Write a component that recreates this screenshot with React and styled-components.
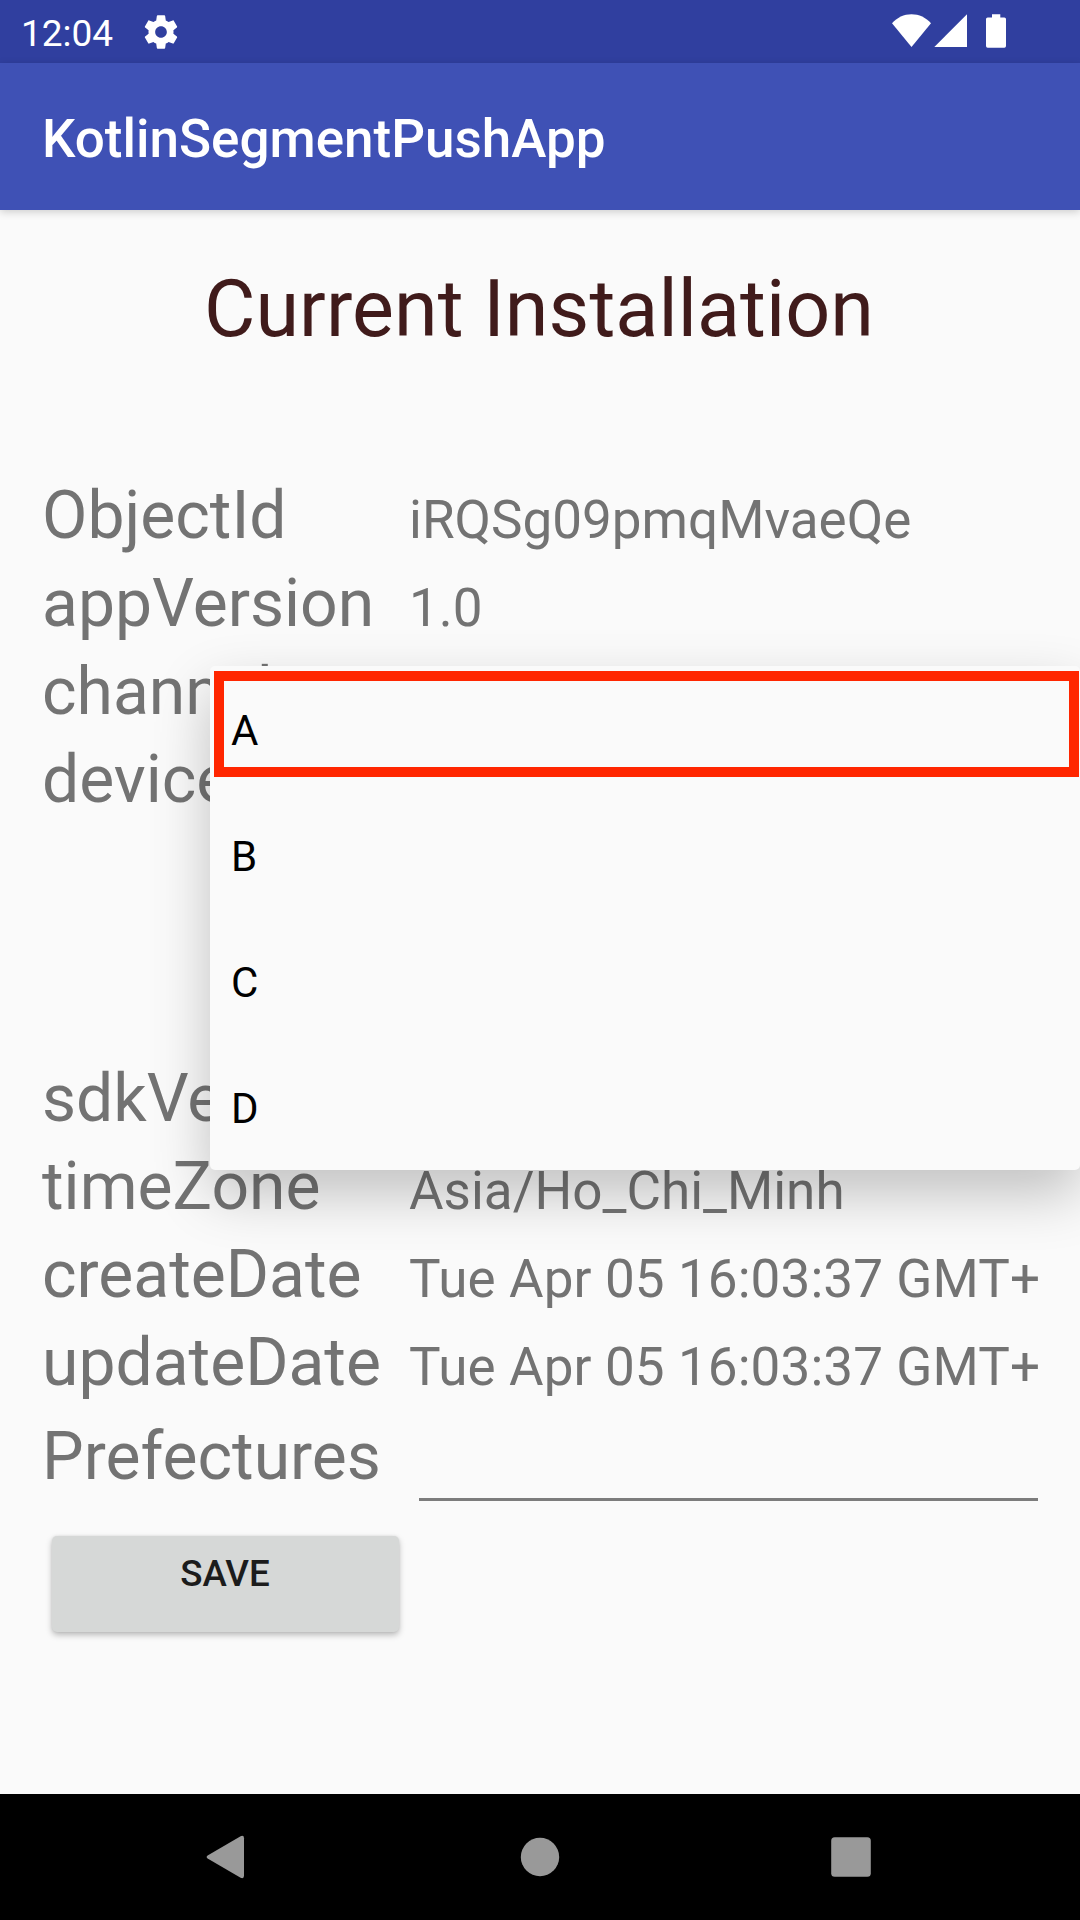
import React from "react";
import styled, { createGlobalStyle } from "styled-components";

const GlobalStyle = createGlobalStyle`
  *, *::before, *::after { box-sizing: border-box; }
  body { margin: 0; background: #fafafa; font-family: Roboto, "Noto Sans", sans-serif; }
`;

const Screen = styled.div`
  position: relative;
  display: flex;
  flex-direction: column;
  width: 1080px;
  height: 1920px;
  overflow: hidden;
  background: #fafafa;
`;

const StatusBar = styled.div`
  display: flex;
  align-items: center;
  height: 63px;
  flex: none;
  padding: 0 74px 0 21px;
  background: #303f9f;
  color: #fff;
`;

const Clock = styled.span`
  font-size: 37px;
  line-height: 44px;
  padding-top: 4px;
  width: 120px;
`;

const StatusIcons = styled.div`
  display: flex;
  align-items: center;
  margin-left: auto;
`;

const Glyph = styled.svg`
  display: block;
  flex: none;
  margin-left: ${(p) => p.$gap || 0}px;
`;

const AppBar = styled.header`
  display: flex;
  align-items: center;
  height: 147px;
  flex: none;
  padding: 5px 42px 0;
  background: #3f51b5;
  box-shadow: 0 2px 8px rgba(0, 0, 0, 0.18);
`;

const AppTitle = styled.h1`
  margin: 0;
  font-size: 53px;
  font-weight: 500;
  line-height: 62px;
  color: #fff;
`;

const Content = styled.main`
  display: flex;
  flex-direction: column;
  flex: 1;
  padding: 53px 42px 0;
`;

const Heading = styled.h2`
  margin: 0 0 117px;
  padding-right: 2px;
  font-size: 79px;
  font-weight: 400;
  line-height: 92px;
  letter-spacing: 0.08px;
  text-align: center;
  color: #401b1b;
`;

const Row = styled.div`
  display: flex;
  align-items: baseline;
  height: ${(p) => p.$height || 88}px;
  flex: none;
  color: #737373;
`;

const Label = styled.span`
  width: 367px;
  flex: none;
  font-size: 66px;
  line-height: 87px;
`;

const Value = styled.span`
  flex: 1;
  font-size: 53px;
  line-height: 62px;
  letter-spacing: ${(p) => (p.$date ? "0.1px" : "0")};
  white-space: nowrap;
`;

const FieldRow = styled.div`
  display: flex;
  height: 118px;
  flex: none;
  padding-top: 6px;
  color: #737373;
`;

const Field = styled.div`
  flex: 1;
  height: 88px;
  margin-left: 10px;
  border-bottom: 3px solid #7c7c7c;
`;

const SaveButton = styled.button`
  display: flex;
  justify-content: center;
  width: 347px;
  height: 96px;
  margin: 11px 0 0 10px;
  padding: 16px 1px 0 0;
  border: 0;
  border-radius: 5px;
  background: #d6d8d7;
  color: #1c1c1c;
  font-family: inherit;
  font-size: 36.75px;
  font-weight: 500;
  line-height: 43px;
  align-items: flex-start;
  box-shadow: 0 3px 6px rgba(0, 0, 0, 0.26), 0 0 3px rgba(0, 0, 0, 0.08);
`;

const Popup = styled.ul`
  position: absolute;
  left: 210px;
  top: 666px;
  width: 870px;
  margin: 0;
  padding: 0;
  list-style: none;
  border-radius: 5px;
  background: #fafafa;
  box-shadow: 0 24px 56px rgba(0, 0, 0, 0.23);
`;

const Option = styled.li`
  display: flex;
  align-items: center;
  height: 126px;
  padding: 3px 21px 0;
  font-size: 42px;
  line-height: 50px;
  color: #000;
`;

const Highlight = styled.div`
  position: absolute;
  left: 3.5px;
  top: 5px;
  width: 865.5px;
  height: 106px;
  border: 10px solid #ff2600;
`;

const NavBar = styled.nav`
  display: grid;
  grid-template-columns: repeat(3, 311px);
  justify-content: center;
  place-items: center;
  height: 126px;
  flex: none;
  background: #000;
`;

const details = [
  { label: "ObjectId", value: "iRQSg09pmqMvaeQe" },
  { label: "appVersion", value: "1.0" },
  { label: "channels" },
  { label: "deviceToken", height: 319 },
  { label: "sdkVersion" },
  { label: "timeZone", value: "Asia/Ho_Chi_Minh" },
  { label: "createDate", value: "Tue Apr 05 16:03:37 GMT+", date: true },
  { label: "updateDate", value: "Tue Apr 05 16:03:37 GMT+", date: true },
];

const options = ["A", "B", "C", "D"];

const gearPath =
  "M19.43 12.98c.04-.32.07-.64.07-.98s-.03-.66-.07-.98l2.11-1.65c.19-.15.24-.42.12-.64l-2-3.46c-.12-.22-.39-.3-.61-.22l-2.49 1c-.52-.4-1.08-.73-1.69-.98l-.38-2.65C14.46 2.18 14.25 2 14 2h-4c-.25 0-.46.18-.49.42l-.38 2.65c-.61.25-1.17.59-1.69.98l-2.49-1c-.23-.09-.49 0-.61.22l-2 3.46c-.13.22-.07.49.12.64l2.11 1.65c-.04.32-.07.65-.07.98s.03.66.07.98l-2.11 1.65c-.19.15-.24.42-.12.64l2 3.46c.12.22.39.3.61.22l2.49-1c.52.4 1.08.73 1.69.98l.38 2.65c.03.24.24.42.49.42h4c.25 0 .46-.18.49-.42l.38-2.65c.61-.25 1.17-.59 1.69-.98l2.49 1c.23.09.49 0 .61-.22l2-3.46c.12-.22.07-.49-.12-.64l-2.11-1.65zM12 15.5c-1.93 0-3.5-1.57-3.5-3.5s1.57-3.5 3.5-3.5 3.5 1.57 3.5 3.5-1.57 3.5-3.5 3.5z";

export default function App() {
  return (
    <Screen>
      <GlobalStyle />
      <StatusBar>
        <Clock>12:04</Clock>
        <Glyph width="40" height="40" viewBox="0 0 24 24" fill="#fff">
          <path d={gearPath} />
        </Glyph>
        <StatusIcons>
          <Glyph width="39" height="35" viewBox="0 0 39 35" fill="#fff">
            <path d="M0 9.3C5 3.6 12 .3 19.5 .3S34 3.6 39 9.3L19.5 33z" />
          </Glyph>
          <Glyph $gap={3} width="33" height="35" viewBox="0 0 33 35" fill="#fff">
            <path d="M33 .3V33H.3z" />
          </Glyph>
          <Glyph $gap={19} width="20" height="35" viewBox="0 0 20 35" fill="#fff">
            <path d="M6 0.2h8.3v3.2h4A1.7 1.7 0 0 1 20 5.1V32a1.7 1.7 0 0 1-1.7 1.7H1.7A1.7 1.7 0 0 1 0 32V5.1a1.7 1.7 0 0 1 1.7-1.7H6z" />
          </Glyph>
        </StatusIcons>
      </StatusBar>
      <AppBar>
        <AppTitle>KotlinSegmentPushApp</AppTitle>
      </AppBar>
      <Content>
        <Heading>Current Installation</Heading>
        {details.map((d) => (
          <Row key={d.label} $height={d.height}>
            <Label>{d.label}</Label>
            {d.value && <Value $date={d.date}>{d.value}</Value>}
          </Row>
        ))}
        <FieldRow>
          <Label>Prefectures</Label>
          <Field />
        </FieldRow>
        <SaveButton type="button">SAVE</SaveButton>
      </Content>
      <NavBar>
        <Glyph width="46" height="46" viewBox="0 0 46 46" fill="#999">
          <path d="M1.6 21.4L34.6 2.2Q38 .9 38 4.2V41.8Q38 45.1 34.6 43.8L1.6 24.6Q-.4 23 1.6 21.4z" />
        </Glyph>
        <Glyph width="40" height="40" viewBox="0 0 40 40" fill="#999">
          <circle cx="20" cy="20" r="19.2" />
        </Glyph>
        <Glyph width="40" height="40" viewBox="0 0 40 40" fill="#999">
          <rect x="0.2" y="0.2" width="39.6" height="39.6" rx="3.5" />
        </Glyph>
      </NavBar>
      <Popup>
        {options.map((o) => (
          <Option key={o}>{o}</Option>
        ))}
        <Highlight />
      </Popup>
    </Screen>
  );
}
